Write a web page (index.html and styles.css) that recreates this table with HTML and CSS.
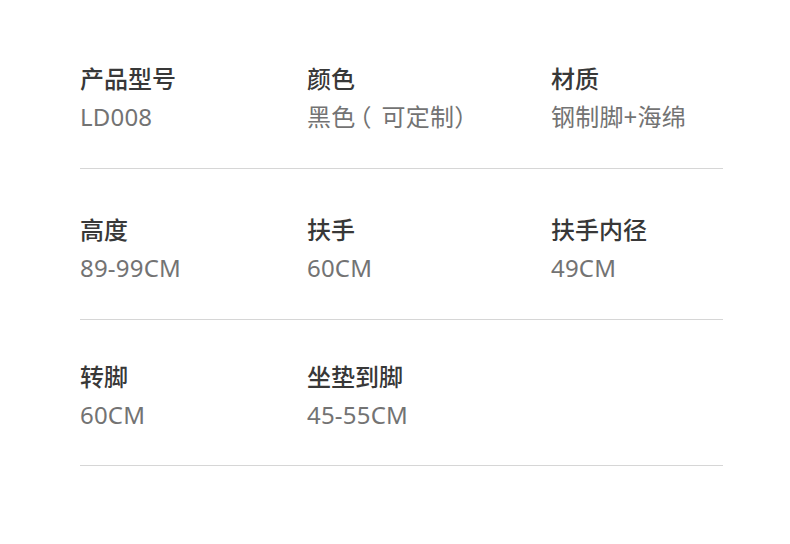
FILE: index.html
```html
<!DOCTYPE html>
<html lang="zh-CN">
<head>
<meta charset="utf-8">
<title>产品参数</title>
<link rel="stylesheet" href="styles.css">
</head>
<body>
<div class="specs">
  <div class="row">
    <div class="cell"><div class="label">产品型号</div><div class="value">LD008</div></div>
    <div class="cell"><div class="label">颜色</div><div class="value">黑色<span class="paren-open">（</span>可定制）</div></div>
    <div class="cell"><div class="label">材质</div><div class="value">钢制脚+海绵</div></div>
  </div>
  <div class="row">
    <div class="cell"><div class="label">高度</div><div class="value">89-99CM</div></div>
    <div class="cell"><div class="label">扶手</div><div class="value">60CM</div></div>
    <div class="cell"><div class="label">扶手内径</div><div class="value">49CM</div></div>
  </div>
  <div class="row">
    <div class="cell"><div class="label">转脚</div><div class="value">60CM</div></div>
    <div class="cell"><div class="label">坐垫到脚</div><div class="value">45-55CM</div></div>
    <div class="cell"></div>
  </div>
</div>
</body>
</html>
```
FILE: styles.css
```css
html, body {
  margin: 0;
  padding: 0;
  background: #ffffff;
}
body {
  font-family: "Noto Sans", "Noto Sans CJK SC", sans-serif;
  width: 790px;
  height: 544px;
  overflow: hidden;
}
.specs {
  margin-left: 80px;
  width: 643px;
  padding-top: 19px;
}
.row {
  display: grid;
  grid-template-columns: 227px 244px 1fr;
  padding: 41px 0 33px;
  border-bottom: 1px solid #d6d6d6;
}
.row:nth-child(2) {
  padding-top: 42px;
}
.row:nth-child(3) {
  padding-top: 38px;
  padding-bottom: 32px;
}
.label {
  font-size: 24px;
  line-height: 36px;
  font-weight: 500;
  color: #383838;
  font-family: "Noto Sans CJK SC", sans-serif;
}
.value {
  margin-top: 3px;
  font-size: 24px;
  line-height: 36px;
  font-weight: 400;
  color: #737373;
  letter-spacing: 0.2px;
}
.paren-open {
  font-feature-settings: "halt";
  margin-left: 4px;
  margin-right: 10px;
}
```
